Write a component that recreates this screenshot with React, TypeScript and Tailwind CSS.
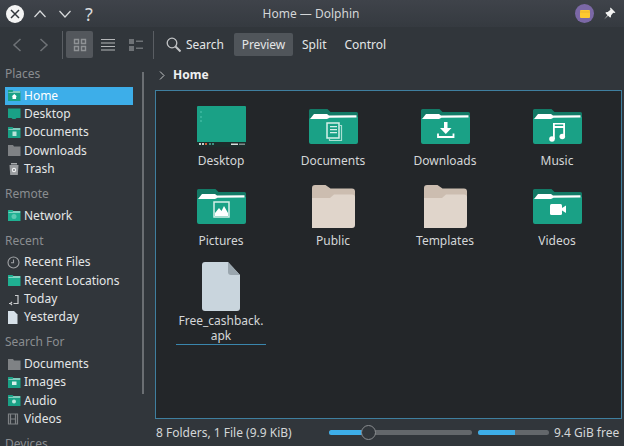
import { ReactNode } from 'react';

const places = [
  { title: 'Places', items: [['Home', 'home'], ['Desktop', 'desktop'], ['Documents', 'docs'], ['Downloads', 'gray'], ['Trash', 'trash']] },
  { title: 'Remote', items: [['Network', 'net']] },
  { title: 'Recent', items: [['Recent Files', 'clock'], ['Recent Locations', 'plain'], ['Today', 'today'], ['Yesterday', 'page']] },
  { title: 'Search For', items: [['Documents', 'gray'], ['Images', 'img'], ['Audio', 'audio'], ['Videos', 'film']] },
];

const GREEN = '#1aa186';

// small icon used in the Places panel
function SideIcon({ kind }: { kind: string }) {
  if (kind === 'desktop') {
    return (
      <svg width="14" height="11" viewBox="0 0 14 11">
        <path d="M1 .5h12.500v9.500h-4l-1 1h-3l-1-1h-3.500z" fill={GREEN} />
      </svg>
    );
  }
  if (kind === 'gray') {
    return (
      <svg width="14" height="11" viewBox="0 0 14 11">
        <path d="M1 0h5l1 1.500h6.500v9.500h-12.500z" fill="#7f8285" />
      </svg>
    );
  }
  if (kind === 'trash') {
    return (
      <svg width="14" height="14" viewBox="0 0 14 14">
        <path d="M4 1h6v1.500h-6z" fill="#a8abae" />
        <path d="M2.500 3h9l-.7 10h-7.600z" fill="#9a9da0" />
        <circle cx="7" cy="8" r="2.200" fill="#eff0f1" />
        <circle cx="7" cy="8" r=".9" fill="#6f7276" />
      </svg>
    );
  }
  if (kind === 'clock') {
    return (
      <svg width="13" height="13" viewBox="0 0 13 13" fill="none" stroke="#a0a3a6" strokeWidth="1.100">
        <circle cx="6.500" cy="6.500" r="5.500" />
        <path d="M6.500 3.500v3.200h-2.500" />
      </svg>
    );
  }
  if (kind === 'today') {
    return (
      <svg width="13" height="13" viewBox="0 0 13 13" fill="none" stroke="#c9cbcd" strokeWidth="1.200">
        <path d="M8 2.500h3v8h-4.500" />
        <path d="M2 10.500h1M5 9l-1.500 1.500 1.500 1.500" />
      </svg>
    );
  }
  if (kind === 'page') {
    return (
      <svg width="11" height="13" viewBox="0 0 11 13">
        <path d="M1 0h6l3.500 3.500v9.500h-9.500z" fill="#d6e0e8" />
      </svg>
    );
  }
  if (kind === 'film') {
    return (
      <svg width="12" height="12" viewBox="0 0 12 12" fill="none" stroke="#7f8285" strokeWidth="1.200">
        <path d="M1.500 1h9v10h-9zM3.500 1v10M8.500 1v10M3.500 6h5" />
      </svg>
    );
  }
  return (
    <svg width="14" height="11" viewBox="0 0 14 11">
      <path d="M1 0h4.500l1 1h7v10h-12.500z" fill={kind === 'plain' || kind === 'net' ? '#1fb092' : GREEN} />
      <path d="M1.500 2h4l.8-.6h6.900v1.200h-11.700z" fill="#e8f5f2" />
      {kind === 'home' && <path d="M7.300 4l2.700 2.500h-.9v2.500h-3.600v-2.500h-.9z" fill="#ffffff" />}
      {kind === 'docs' && <path d="M5.500 4.500h4v4.500h-4z" fill="#b9e5db" />}
      {kind === 'img' && <path d="M5 4.500h4.500v3.500h-4.500z" fill="#d8f1ec" />}
      {kind === 'audio' && <circle cx="7" cy="6.500" r="2" fill="#b9e5db" />}
      {kind === 'net' && <circle cx="7" cy="6.500" r="2.500" fill="#5cc9b2" />}
    </svg>
  );
}

function Folder({ children }: { children?: ReactNode }) {
  return (
    <svg width="49" height="35" viewBox="0 0 49 35">
      <path d="M1.500 0h17l3 3h26a1.500 1.500 0 0 1 1.500 1.500v10h-49v-13a1.500 1.500 0 0 1 1.500-1.500z" fill="#137a66" />
      <path d="M0 9.500h18l3-1.500 28-.2v25.200a2 2 0 0 1-2 2h-45a2 2 0 0 1-2-2z" fill={GREEN} />
      <path d="M5 5h13l2 1.500 27.500-.2v2.200l-27 .2-2.500 1.300h-17z" fill="#ffffff" />
      {children}
    </svg>
  );
}

function PlainFolder() {
  return (
    <svg width="43" height="43" viewBox="0 0 43 43">
      <path d="M0 3a3 3 0 0 1 3-3h10.500l5 3.500h21.500a3 3 0 0 1 3 3v10h-43z" fill="#ccbdb0" />
      <path d="M0 13h18l4-3.500h18a3 3 0 0 1 3 3v27.500a3 3 0 0 1-3 3h-40z" fill="#e0d5cb" />
    </svg>
  );
}

function DesktopIcon() {
  return (
    <svg width="49" height="41" viewBox="0 0 49 41">
      <rect width="49" height="41" rx="1" fill="#1aa186" />
      <rect y="36" width="49" height="5" fill="#1d2c2b" />
      <rect x="3" y="5" width="2" height="2" fill="#35b39a" />
      <rect x="3" y="10" width="2" height="2" fill="#35b39a" />
      <rect x="3" y="14" width="2" height="2" fill="#35b39a" />
      <rect x="2" y="37" width="2" height="2" fill="#c8cccc" />
      <rect x="5" y="37" width="2" height="2" fill="#c8cccc" />
      <rect x="8" y="37" width="2" height="2" fill="#d0603a" />
      <rect x="12" y="37" width="2" height="2" fill="#3f8f80" />
      <rect x="15" y="37" width="2" height="2" fill="#3f8f80" />
      <rect x="34" y="37.500" width="7" height="1.500" fill="#d8dcdc" />
      <rect x="42" y="37.500" width="6" height="1.500" fill="#7f8a8a" />
    </svg>
  );
}

function FileIcon() {
  return (
    <svg width="38" height="49" viewBox="0 0 38 49">
      <path d="M3 0h23l12 13v33a3 3 0 0 1-3 3h-32a3 3 0 0 1-3-3v-43a3 3 0 0 1 3-3z" fill="#c9d5dd" />
      <path d="M26 0l12 13h-9a3 3 0 0 1-3-3z" fill="#9aa6ae" />
    </svg>
  );
}

const files: { name: ReactNode; icon: ReactNode }[] = [
  { name: 'Desktop', icon: <DesktopIcon /> },
  {
    name: 'Documents',
    icon: (
      <Folder>
        <path d="M18 14h12v15h-12z" fill="none" stroke="#d6efe9" strokeWidth="1.500" />
        <path d="M21 17h7v1.300h-7zM21 20h7v1.300h-7zM21 23h7v1.300h-7z" fill="#d6efe9" />
        <path d="M30 16.500h2.500v15h-12v-2" fill="none" stroke="#a9dfd3" strokeWidth="1.200" />
      </Folder>
    ),
  },
  {
    name: 'Downloads',
    icon: (
      <Folder>
        <path d="M23 13h3.500v6h4l-5.700 6-5.800-6h4z" fill="#ffffff" />
        <path d="M17 24.500v3.500h15.500v-3.500" fill="none" stroke="#ffffff" strokeWidth="1.800" />
      </Folder>
    ),
  },
  {
    name: 'Music',
    icon: (
      <Folder>
        <path d="M20 14h12v14h-1.800v-9h-8.400v11h-1.800z" fill="#ffffff" />
        <circle cx="19" cy="30" r="2.800" fill="#ffffff" />
        <circle cx="29.300" cy="27.500" r="2.800" fill="#ffffff" />
        <path d="M21.800 15.500h8.400v1.500h-8.400z" fill={GREEN} />
      </Folder>
    ),
  },
  {
    name: 'Pictures',
    icon: (
      <Folder>
        <path d="M17 13h15v15h-15z" fill="none" stroke="#d6efe9" strokeWidth="1.500" />
        <path d="M18 27v-3l4-5 2.500 3 2.500-5 4 7v3z" fill="#ffffff" />
      </Folder>
    ),
  },
  { name: 'Public', icon: <PlainFolder /> },
  { name: 'Templates', icon: <PlainFolder /> },
  {
    name: 'Videos',
    icon: (
      <Folder>
        <rect x="17" y="15" width="12" height="11" rx="1.500" fill="#ffffff" />
        <path d="M29 19l4-2.500v7.500l-4-2.500z" fill="#ffffff" />
      </Folder>
    ),
  },
];

function ToolbarIcon({ d }: { d: string }) {
  return (
    <svg width="14" height="14" viewBox="0 0 14 14" fill="none" stroke="#8f9295" strokeWidth="1.400">
      <path d={d} />
    </svg>
  );
}

export default function App() {
  return (
    <div className="w-[624px] h-[446px] overflow-hidden flex flex-col bg-[#31363b] text-[#e4e6e7] text-[12px] font-['Noto_Sans',sans-serif]">
      {/* Title bar */}
      <div className="h-[27px] shrink-0 flex items-center bg-gradient-to-b from-[#3f434a] to-[#353a40]">
        <div className="flex-1 flex items-center pl-[6px]">
          <div className="w-[18px] h-[18px] rounded-full bg-[#f4f4f4] flex items-center justify-center">
            <svg width="10" height="10" viewBox="0 0 10 10" stroke="#31363b" strokeWidth="1.500">
              <path d="M1 1l8 8M9 1l-8 8" />
            </svg>
          </div>
          <svg className="ml-[10px]" width="12" height="8" viewBox="0 0 12 8" fill="none" stroke="#d8dadc" strokeWidth="1.200">
            <path d="M.5 7l5.500-6 5.500 6" />
          </svg>
          <svg className="ml-[13px]" width="12" height="8" viewBox="0 0 12 8" fill="none" stroke="#d8dadc" strokeWidth="1.200">
            <path d="M.5 1l5.500 6 5.500-6" />
          </svg>
          <span className="ml-[14px] text-[18px] leading-none text-[#d8dadc]">?</span>
        </div>
        <div className="text-[#d4d6d8]">Home — Dolphin</div>
        <div className="flex-1 flex items-center justify-end pr-[8px] gap-[9px]">
          <div className="w-[19px] h-[19px] rounded-full bg-[#7b68a6] flex items-center justify-center">
            <svg width="10" height="8" viewBox="0 0 10 8">
              <path d="M0 1a1 1 0 0 1 1-1h8a1 1 0 0 1 1 1v6a1 1 0 0 1-1 1h-8a1 1 0 0 1-1-1z" fill="#fdc92f" />
              <path d="M0 2h10" stroke="#e0a52a" strokeWidth=".6" />
            </svg>
          </div>
          <svg width="13" height="13" viewBox="0 0 12 12" fill="#f2f2f2">
            <path d="M7 .5l4.500 4.500-1 .6-1-.4-2 2.500-.3 2-1-.2-1.500-1.500-3.700 3.500 3.200-4-1.600-1.600-.2-1 2-.3 2.500-2-.4-1z" />
          </svg>
        </div>
      </div>

      {/* Toolbar */}
      <div className="h-[35px] shrink-0 flex items-center pl-[12px]">
        <svg width="10" height="14" viewBox="0 0 10 14" fill="none" stroke="#6e7276" strokeWidth="1.500">
          <path d="M8.500 1l-6.500 6 6.500 6" />
        </svg>
        <svg className="ml-[17px]" width="10" height="14" viewBox="0 0 10 14" fill="none" stroke="#6e7276" strokeWidth="1.500">
          <path d="M1.500 1l6.500 6-6.500 6" />
        </svg>
        <div className="ml-[13px] w-px h-[28px] bg-[#5a5e63]" />
        <div className="ml-[3px] w-[27px] h-[27px] rounded-[2px] bg-[#53575c] flex items-center justify-center">
          <ToolbarIcon d="M1.500 1.500h4v4h-4zM8.500 1.500h4v4h-4zM1.500 8.500h4v4h-4zM8.500 8.500h4v4h-4z" />
        </div>
        <div className="ml-[8px]">
          <svg width="14" height="14" viewBox="0 0 14 14" stroke="#b4b6b8" strokeWidth="1.200">
            <path d="M0 1.500h14M0 5h14M0 8.500h14M0 12h14" />
          </svg>
        </div>
        <div className="ml-[14px]">
          <svg width="14" height="14" viewBox="0 0 14 14" fill="#6e7276">
            <path d="M0 1h5v5h-5zM0 8h5v5h-5zM7 2.500h7v1.500h-7zM7 9.500h7v1.500h-7z" />
          </svg>
        </div>
        <div className="ml-[10px] w-px h-[28px] bg-[#5a5e63]" />
        <svg className="ml-[12px]" width="15" height="15" viewBox="0 0 15 15" fill="none" stroke="#c2c4c6" strokeWidth="1.300">
          <circle cx="6" cy="6" r="4.800" />
          <path d="M9.500 9.500l5 5" strokeWidth="2" />
        </svg>
        <span className="ml-[5px]">Search</span>
        <div className="ml-[10px] h-[23px] w-[59px] rounded-[2px] bg-[#50555a] flex items-center justify-center">Preview</div>
        <span className="ml-[9px]">Split</span>
        <span className="ml-[18px]">Control</span>
      </div>

      {/* Body */}
      <div className="flex-1 min-h-0 flex">
        <div className="w-[155px] shrink-0 flex overflow-hidden">
          <div className="w-[128px] ml-[5px] pt-[3px] flex flex-col gap-[7px]">
            {places.map((section) => (
              <div key={section.title}>
                <div className="h-[18px] mb-[3.500px] leading-[18px] text-[#8a8d90]">{section.title}</div>
                {section.items.map(([label, icon]) => (
                  <div
                    key={label + icon}
                    className={`h-[18.300px] flex items-center whitespace-nowrap ${label === 'Home' ? 'bg-[#3daee9] text-white' : ''}`}
                  >
                    <div className="w-[18px] pl-[2px] flex justify-start shrink-0">
                      <SideIcon kind={icon} />
                    </div>
                    <span className="leading-none pl-[1px]">{label}</span>
                  </div>
                ))}
              </div>
            ))}
            <div className="h-[18px] leading-[18px] text-[#8a8d90]">Devices</div>
          </div>
          <div className="ml-[9px] mt-[10px] w-[2px] h-[322px] bg-[#6b6f73]" />
        </div>

        <div className="flex-1 min-w-0 flex flex-col pr-[2px]">
          <div className="h-[28px] shrink-0 flex items-center pl-[4px] pb-[2px]">
            <svg width="6" height="9" viewBox="0 0 6 9" fill="none" stroke="#c2c4c6" strokeWidth="1">
              <path d="M1 .5l4 4-4 4" />
            </svg>
            <span className="ml-[8px] font-bold text-[#eff0f1]">Home</span>
          </div>
          <div className="h-[329px] shrink-0 bg-[#232629] border border-[#3f7f9f] pt-[10px] pl-[9px]">
            <div className="grid grid-cols-[repeat(4,112px)] auto-rows-[68px] gap-y-[12px]">
              {files.map((file, i) => (
                <div key={i} className="flex flex-col items-center">
                  <div className="h-[50px] flex items-center justify-center shrink-0">{file.icon}</div>
                  <div className="mt-[2px] leading-[15px] text-[#d4d6d8]">{file.name}</div>
                </div>
              ))}
              <div className="flex flex-col items-center">
                <div className="h-[50px] flex items-center justify-center shrink-0">
                  <FileIcon />
                </div>
                <div className="mt-[2px] w-[90px] pb-[1px] text-center leading-[15px] text-[#d4d6d8] border-b border-[#3a86ad]">
                  Free_cashback.
                  <br />
                  apk
                </div>
              </div>
            </div>
          </div>
          <div className="flex-1 flex items-center pl-[1px]">
            <span className="w-[173px] shrink-0 text-[#d4d6d8]">8 Folders, 1 File (9.9 KiB)</span>
            <div className="relative w-[143px] h-[5px] shrink-0 rounded-full bg-[#63676b]">
              <div className="w-[39px] h-full rounded-l-full bg-[#3daee9]" />
              <div className="absolute left-[32px] top-[-5px] w-[15px] h-[15px] rounded-full bg-[#31363b] border border-[#8a8d90]" />
            </div>
            <div className="ml-[6px] w-[71px] h-[5px] shrink-0 rounded-full bg-[#63676b]">
              <div className="w-[37px] h-full rounded-l-full bg-[#3daee9]" />
            </div>
            <span className="ml-[5px] whitespace-nowrap text-[#d4d6d8]">9.4 GiB free</span>
          </div>
        </div>
      </div>
    </div>
  );
}
